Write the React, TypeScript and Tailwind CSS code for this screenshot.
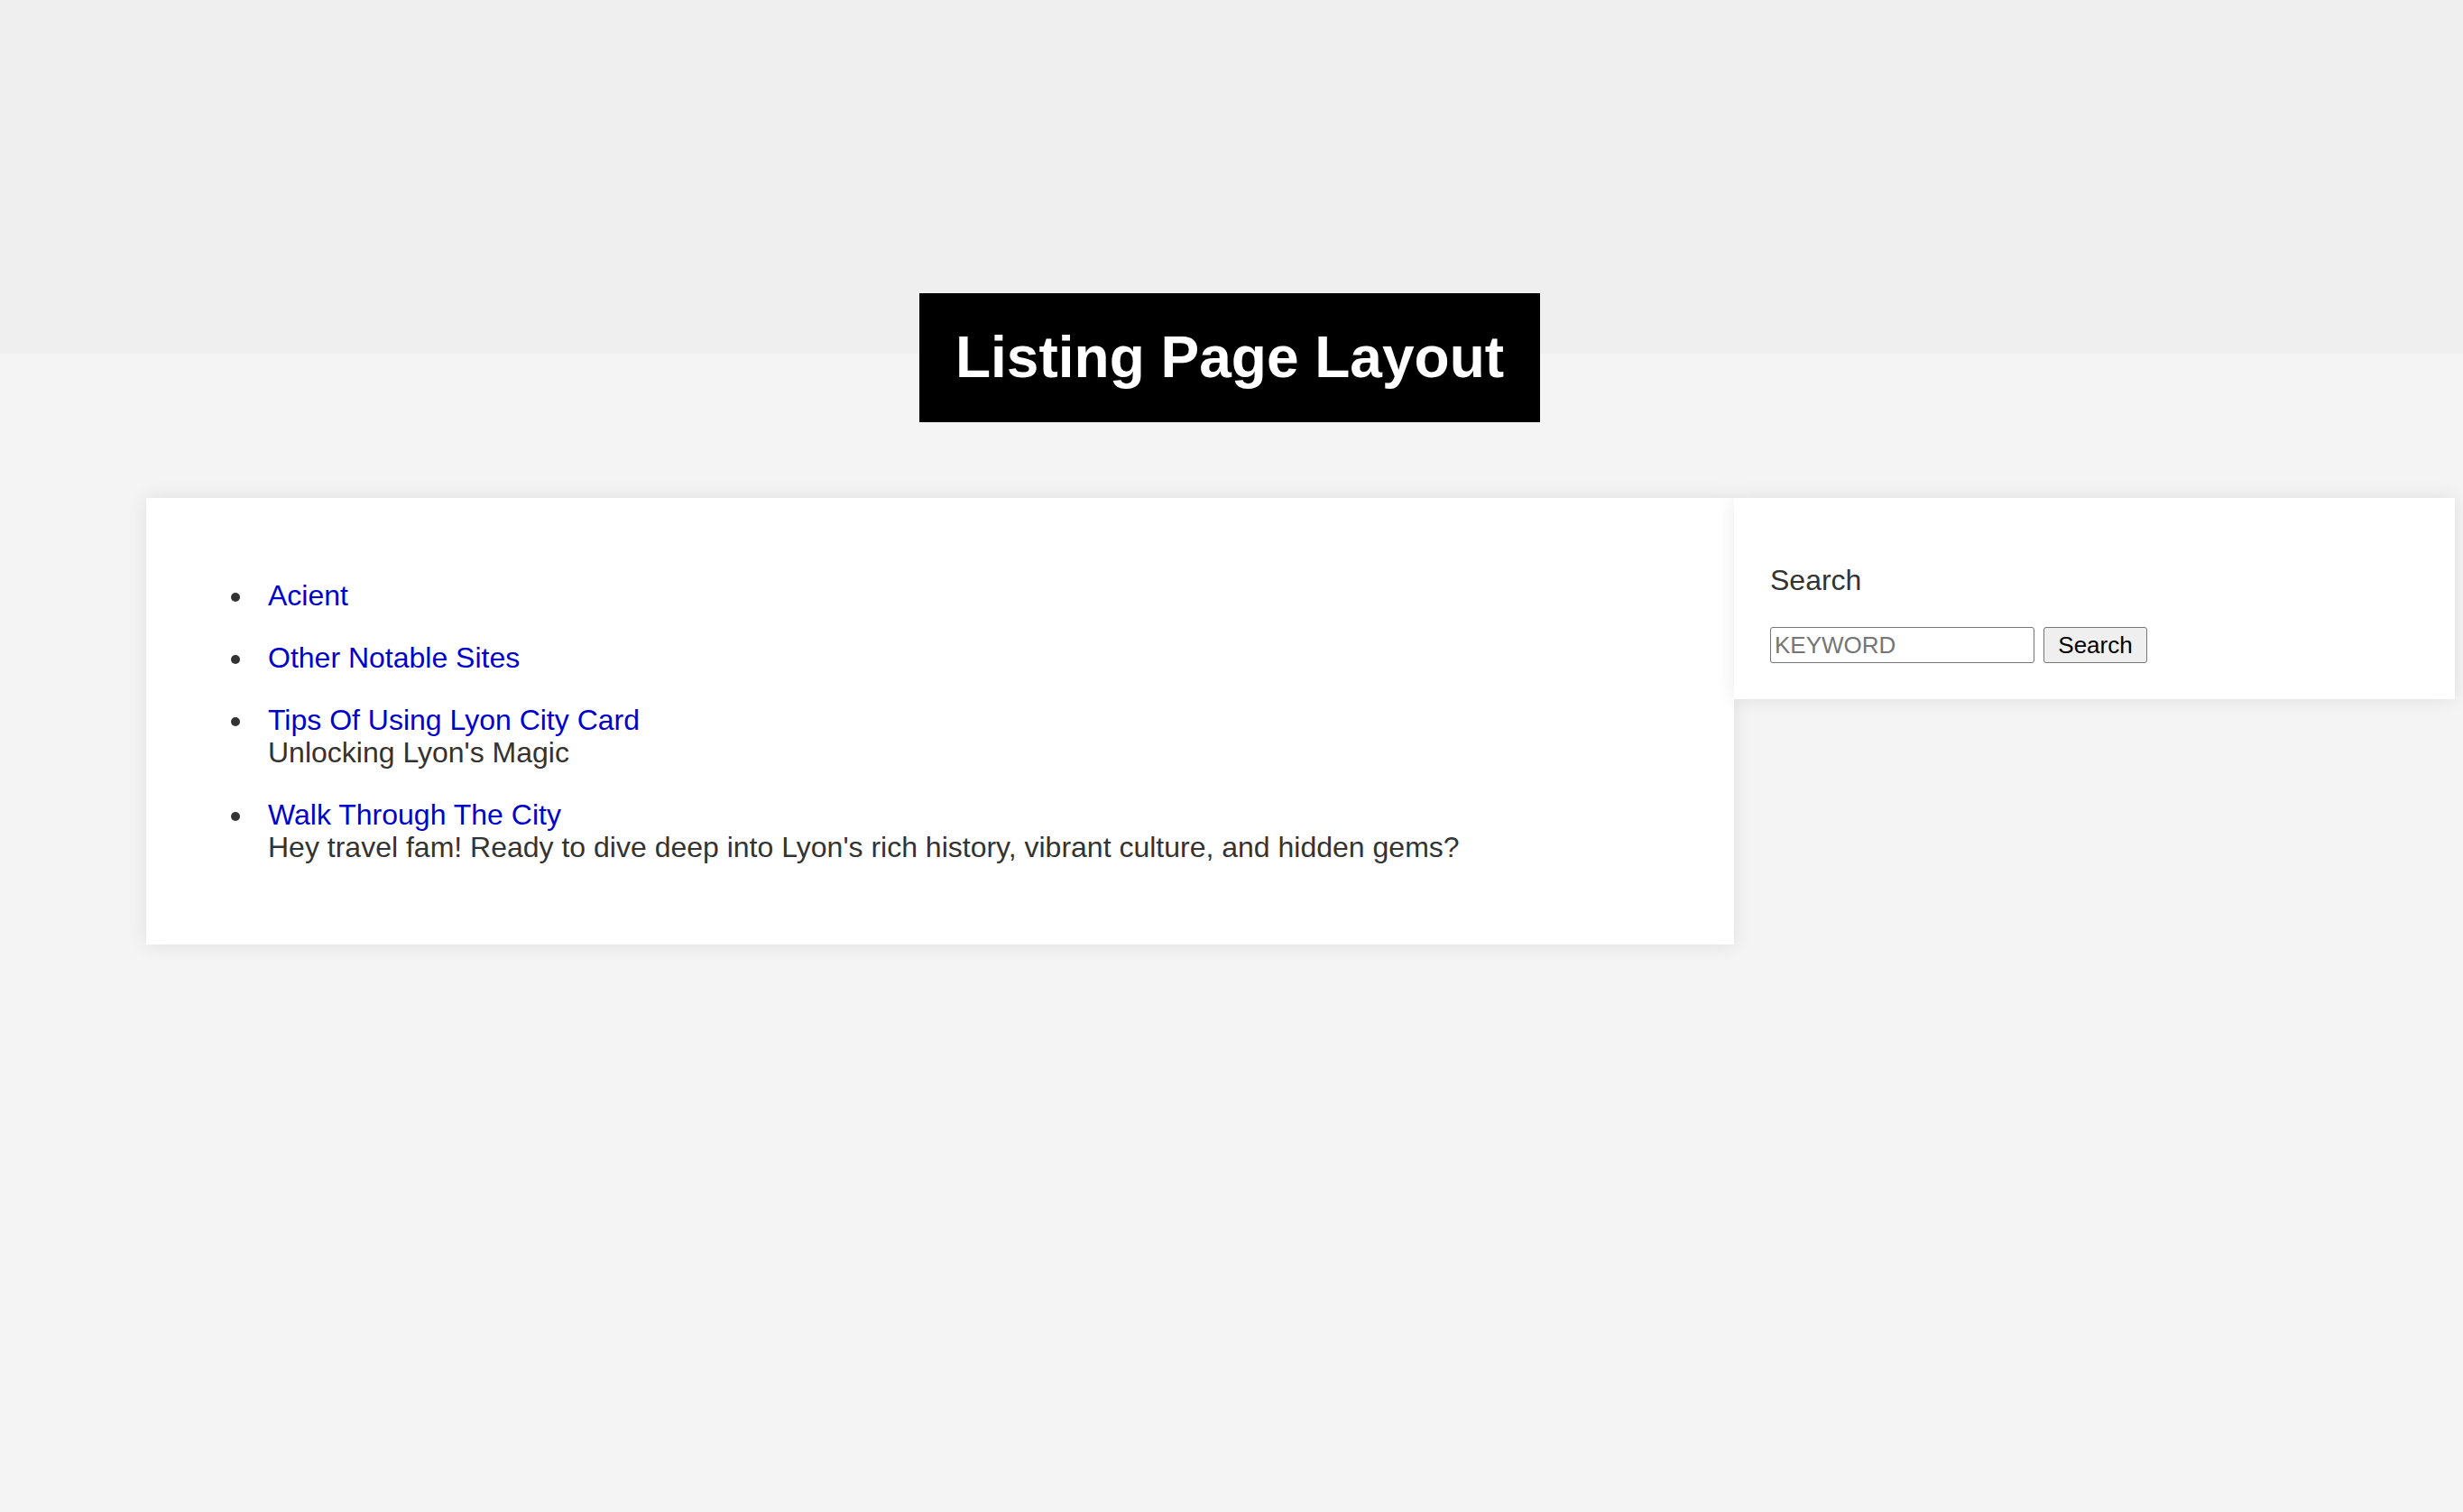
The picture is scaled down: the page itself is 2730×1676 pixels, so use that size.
import React from "react";

export default function App() {
  const items: { title: string; desc?: string }[] = [
    { title: "Acient" },
    { title: "Other Notable Sites" },
    { title: "Tips Of Using Lyon City Card", desc: "Unlocking Lyon's Magic" },
    {
      title: "Walk Through The City",
      desc: "Hey travel fam! Ready to dive deep into Lyon's rich history, vibrant culture, and hidden gems?",
    },
  ];
  return (
    <div
      className="min-h-screen bg-[#f4f4f4] text-[#333333]"
      style={{ fontFamily: '"Liberation Sans", Arial, sans-serif' }}
    >
      <header className="h-[392px] bg-[#efefef]" />
      <div className="flex justify-center -mt-[67px] pr-[4px]">
        <h1 className="bg-black text-white font-bold text-[64px] leading-[73px] px-[40px] py-[35px]">
          Listing Page Layout
        </h1>
      </div>
      <div className="flex items-start ml-[162px] mt-[84px]">
        <main className="w-[1760px] bg-white shadow-[0_0_20px_rgba(0,0,0,0.09)] pt-[90px] pb-[90px] pl-[94px]">
          <ul className="text-[32px] leading-[36px]">
            {items.map((it, i) => (
              <li key={i} className={"flex " + (i < items.length - 1 ? "mb-[33px]" : "")}>
                <span className="w-[41px] shrink-0 pt-[15px]">
                  <span className="block w-[10px] h-[10px] rounded-full bg-[#333333]" />
                </span>
                <div>
                  <a href="#" className="text-[#0000cc]">
                    {it.title}
                  </a>
                  {it.desc && <div>{it.desc}</div>}
                </div>
              </li>
            ))}
          </ul>
        </main>
        <aside className="w-[799px] bg-white shadow-[0_0_20px_rgba(0,0,0,0.09)] pt-[73px] pb-[40px] px-[40px]">
          <h3 className="text-[32px] leading-[36px] font-normal">Search</h3>
          <div className="flex items-center gap-[10px] mt-[34px]">
            <input
              type="text"
              placeholder="KEYWORD"
              className="w-[293px] h-[40px] border-[1.75px] border-[#767676] rounded-[3px] px-[4px] text-[26px] text-black placeholder:text-[#757575] bg-white"
            />
            <button className="w-[115px] h-[40px] border-[1.75px] border-[#767676] rounded-[3px] bg-[#efefef] text-[26px] text-black">
              Search
            </button>
          </div>
        </aside>
      </div>
    </div>
  );
}
